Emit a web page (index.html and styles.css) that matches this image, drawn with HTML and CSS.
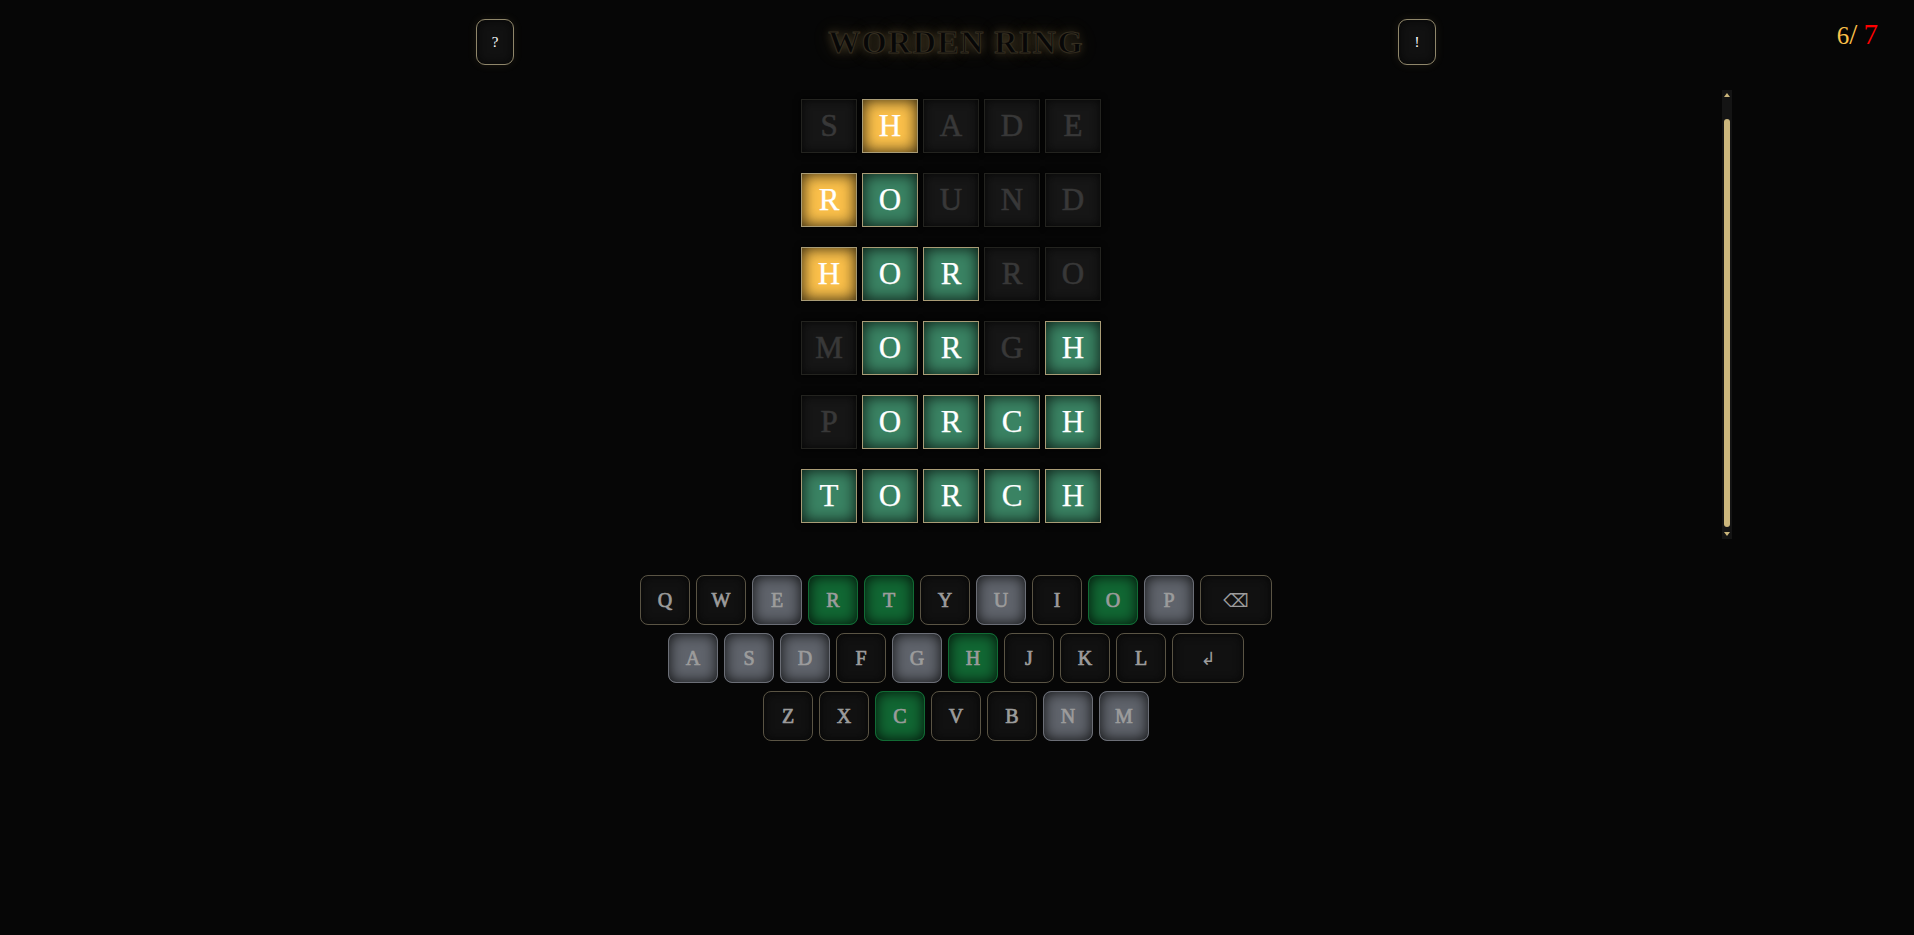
FILE: index.html
```html
<!DOCTYPE html>
<html>

<head>
    <title>Worden Ring</title>
    <link rel="stylesheet" href="styles.css">
</head>

<body>
    <div class="counter"><span class="used">6<span class="slash">/</span></span> <span class="max">7</span></div>

    <header class="top">
        <button class="side-btn">?</button>
        <h1 class="title">WORDEN RING</h1>
        <button class="side-btn">!</button>
    </header>

    <main class="board-wrap">
        <div class="board">
            <div class="row">
                <div class="tile miss">S</div>
                <div class="tile near">H</div>
                <div class="tile miss">A</div>
                <div class="tile miss">D</div>
                <div class="tile miss">E</div>
            </div>
            <div class="row">
                <div class="tile near">R</div>
                <div class="tile hit">O</div>
                <div class="tile miss">U</div>
                <div class="tile miss">N</div>
                <div class="tile miss">D</div>
            </div>
            <div class="row">
                <div class="tile near">H</div>
                <div class="tile hit">O</div>
                <div class="tile hit">R</div>
                <div class="tile miss">R</div>
                <div class="tile miss">O</div>
            </div>
            <div class="row">
                <div class="tile miss">M</div>
                <div class="tile hit">O</div>
                <div class="tile hit">R</div>
                <div class="tile miss">G</div>
                <div class="tile hit">H</div>
            </div>
            <div class="row">
                <div class="tile miss">P</div>
                <div class="tile hit">O</div>
                <div class="tile hit">R</div>
                <div class="tile hit">C</div>
                <div class="tile hit">H</div>
            </div>
            <div class="row">
                <div class="tile hit">T</div>
                <div class="tile hit">O</div>
                <div class="tile hit">R</div>
                <div class="tile hit">C</div>
                <div class="tile hit">H</div>
            </div>
        </div>
        <div class="scrollbar">
            <span class="arrow up"></span>
            <span class="thumb"></span>
            <span class="arrow down"></span>
        </div>
    </main>

    <section class="keyboard">
        <div class="key-row">
            <button class="key">Q</button>
            <button class="key">W</button>
            <button class="key used-key">E</button>
            <button class="key good">R</button>
            <button class="key good">T</button>
            <button class="key">Y</button>
            <button class="key used-key">U</button>
            <button class="key">I</button>
            <button class="key good">O</button>
            <button class="key used-key">P</button>
            <button class="key wide">⌫</button>
        </div>
        <div class="key-row">
            <button class="key used-key">A</button>
            <button class="key used-key">S</button>
            <button class="key used-key">D</button>
            <button class="key">F</button>
            <button class="key used-key">G</button>
            <button class="key good">H</button>
            <button class="key">J</button>
            <button class="key">K</button>
            <button class="key">L</button>
            <button class="key wide">↲</button>
        </div>
        <div class="key-row">
            <button class="key">Z</button>
            <button class="key">X</button>
            <button class="key good">C</button>
            <button class="key">V</button>
            <button class="key">B</button>
            <button class="key used-key">N</button>
            <button class="key used-key">M</button>
        </div>
    </section>
</body>

</html>
```

FILE: styles.css
```css
html {
    background-color: #060606;
}

body {
    margin: 0;
    width: 1912px;
    height: 935px;
    overflow: hidden;
    font-family: "Liberation Serif", serif;
    background-color: #060606;
}

.counter {
    position: absolute;
    top: 16px;
    right: 36px;
    font-size: 25px;
    line-height: 36px;
}

.counter .used {
    color: #fbc04a;
}

.counter .slash {
    font-size: 29px;
}

.counter .max {
    color: #ff0000;
    font-size: 29px;
}

.top {
    width: 960px;
    height: 46px;
    margin: 0 auto;
    padding-top: 19px;
    display: flex;
    justify-content: space-between;
    align-items: center;
}

.side-btn {
    width: 38px;
    height: 46px;
    padding: 0;
    border: 1px solid #8f866a;
    border-radius: 9px;
    background-color: #111111;
    box-shadow: inset 0 0 8px #050505, 0 0 10px rgba(212, 188, 120, 0.1);
    color: #fff;
    font-family: "Liberation Serif", serif;
    font-size: 15px;
}

.title {
    margin: 1px 0 0;
    font-size: 32px;
    font-weight: bold;
    letter-spacing: 1.5px;
    color: #070707;
    -webkit-text-stroke: 1px #352e20;
    text-shadow: 0 0 10px rgba(200, 170, 100, 0.3), 0 0 20px rgba(200, 170, 100, 0.22);
}

.board-wrap {
    width: 1552px;
    height: 449px;
    margin: 25px auto 0;
    display: flex;
}

.board {
    flex: 1;
    padding-top: 9px;
    display: flex;
    flex-direction: column;
    align-items: center;
    gap: 20px;
}

.row {
    display: flex;
    gap: 5px;
}

.tile {
    width: 56px;
    height: 54px;
    box-sizing: border-box;
    display: flex;
    align-items: center;
    justify-content: center;
    font-size: 31px;
    -webkit-text-stroke: 0.25px currentColor;
}

.tile.miss {
    border: 1px solid #23231f;
    background-color: #161616;
    box-shadow: inset 0 0 10px #060606, 0 0 6px #000;
    color: #383838;
    -webkit-text-stroke: 0.6px #383838;
}

.tile.near {
    border: 1px solid #a99c76;
    background-color: #fbc04a;
    box-shadow: inset 0 0 15px rgba(0, 0, 0, 0.85), 0 0 6px #000;
    color: #ffffff;
}

.tile.hit {
    border: 1px solid #a99c76;
    background-color: #3a8363;
    box-shadow: inset 0 0 15px rgba(0, 0, 0, 0.85), 0 0 6px #000;
    color: #ffffff;
}

.scrollbar {
    width: 10px;
    display: flex;
    flex-direction: column;
    align-items: center;
    background-color: #141414;
}

.thumb {
    width: 6px;
    height: 408px;
    margin-top: 22px;
    border-radius: 3px;
    background-color: #cbb67c;
}

.arrow {
    width: 0;
    height: 0;
    border-left: 3.5px solid transparent;
    border-right: 3.5px solid transparent;
}

.arrow.up {
    margin-top: 3px;
    border-bottom: 4px solid #cbb67c;
}

.arrow.down {
    margin-top: 5px;
    border-top: 4px solid #cbb67c;
}

.keyboard {
    margin-top: 36px;
    display: flex;
    flex-direction: column;
    align-items: center;
    gap: 8px;
}

.key-row {
    display: flex;
    gap: 6px;
}

.key {
    width: 50px;
    height: 50px;
    padding: 0;
    border: 1px solid #5a5444;
    border-radius: 8px;
    background-color: #111111;
    box-shadow: inset 0 0 10px #060606;
    color: #9c9c9c;
    font-family: "Liberation Serif", serif;
    font-size: 20px;
    -webkit-text-stroke: 0.7px #9c9c9c;
}

.key.wide {
    width: 72px;
    font-family: "DejaVu Sans", sans-serif;
    font-size: 18px;
    -webkit-text-stroke: 0;
}

.key.used-key {
    border-color: #6b6e76;
    background-color: #5f636b;
    box-shadow: inset 0 0 14px rgba(0, 0, 0, 0.85);
}

.key.good {
    border-color: #116b34;
    background-color: #116733;
    box-shadow: inset 0 0 14px rgba(0, 0, 0, 0.85);
}
```
